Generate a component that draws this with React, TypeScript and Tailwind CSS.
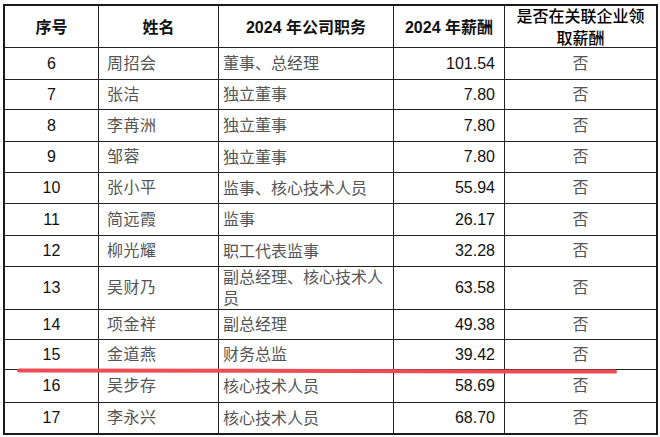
import React from "react";

type Row = { no: string; name: string; pos: React.ReactNode; pay: string; h: string };

const rows: Row[] = [
  { no: "6", name: "周招会", pos: "董事、总经理", pay: "101.54", h: "h-[32px]" },
  { no: "7", name: "张洁", pos: "独立董事", pay: "7.80", h: "h-[30px]" },
  { no: "8", name: "李苒洲", pos: "独立董事", pay: "7.80", h: "h-[32px]" },
  { no: "9", name: "邹蓉", pos: "独立董事", pay: "7.80", h: "h-[31px]" },
  { no: "10", name: "张小平", pos: "监事、核心技术人员", pay: "55.94", h: "h-[31px]" },
  { no: "11", name: "简远霞", pos: "监事", pay: "26.17", h: "h-[32px]" },
  { no: "12", name: "柳光耀", pos: "职工代表监事", pay: "32.28", h: "h-[31px]" },
  {
    no: "13",
    name: "吴财乃",
    pos: (
      <>
        副总经理、核心技术人
        <br />员
      </>
    ),
    pay: "63.58",
    h: "h-[43px]",
  },
  { no: "14", name: "项金祥", pos: "副总经理", pay: "49.38", h: "h-[30px]" },
  { no: "15", name: "金道燕", pos: "财务总监", pay: "39.42", h: "h-[30px]" },
  { no: "16", name: "吴步存", pos: "核心技术人员", pay: "58.69", h: "h-[33px]" },
  { no: "17", name: "李永兴", pos: "核心技术人员", pay: "68.70", h: "h-[31px]" },
];

const font = "font-['Liberation_Sans','Noto_Sans_CJK_SC',sans-serif]";
const cols = "grid grid-cols-[93px_120px_175px_111px_152px]";

export default function App() {
  return (
    <div className={`relative w-[660px] h-[437px] bg-white ${font}`}>
      <div className="pt-[4px] pl-[3px]">
        <div className="w-[655px] border-2 border-[#1a1a1a]">
          {/* header */}
          <div className={`${cols} h-[41px] text-[16px] text-[#111]`}>
            <div className="flex items-center justify-center font-bold">序号</div>
            <div className="flex items-center justify-center font-bold border-l border-[#222]">姓名</div>
            <div className="flex items-center justify-center font-bold border-l border-[#222]">2024 年公司职务</div>
            <div className="flex items-center justify-center font-bold border-l border-[#222]">2024 年薪酬</div>
            <div className="flex flex-col items-center justify-center leading-[22px] font-medium border-l border-[#222] text-black">
              <span>是否在关联企业领</span>
              <span>取薪酬</span>
            </div>
          </div>
          {rows.map((r) => (
            <div key={r.no} className={`${cols} ${r.h} border-t border-[#222] text-[16px]`}>
              <div className="flex items-center justify-center text-[#111]">{r.no}</div>
              <div className="flex items-center pl-[8px] border-l border-[#222] text-[#555] tracking-[0.5px]">{r.name}</div>
              <div className="flex items-center pl-[4px] border-l border-[#222] text-[#555] leading-[21px]">
                <span>{r.pos}</span>
              </div>
              <div className="flex items-center justify-end pr-[9px] border-l border-[#222] text-[#111]">{r.pay}</div>
              <div className="flex items-center justify-center border-l border-[#222] text-[#555]">否</div>
            </div>
          ))}
        </div>
      </div>
      <div className="absolute left-[17px] top-[369px] w-[600px] h-[4px] rounded-full bg-[#ee4b55] rotate-[0.12deg]" />
    </div>
  );
}
